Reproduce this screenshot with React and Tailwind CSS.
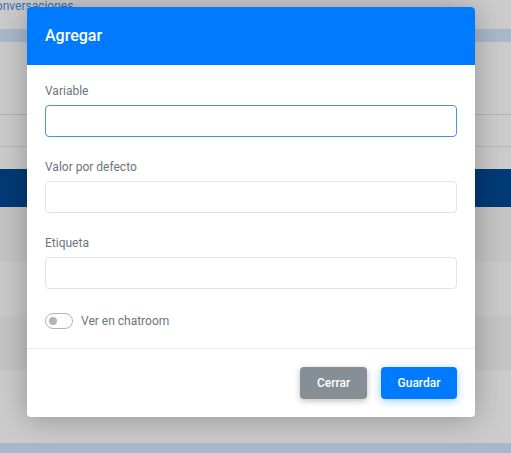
import React from "react";

function Field({ label, focused }) {
  return (
    <div className="mb-[21px]">
      <label className="block h-[18px] text-[12px] leading-[18px] text-[#6c757d] mb-[5px]">{label}</label>
      <input
        type="text"
        className={
          "block w-full h-[32px] rounded-[4px] bg-white px-3 text-[13px] outline-none " +
          (focused ? "border border-[#4a90e2]" : "border border-[#e3e3e3]")
        }
      />
    </div>
  );
}

export default function App() {
  return (
    <div className="relative h-[453px] w-[511px] overflow-hidden bg-[#cbcbcb] font-['Roboto',sans-serif]">
      {/* page behind the dialog */}
      <div className="h-[29px]">
        <span className="relative -left-[12px] -top-[1px] block text-[12px] leading-[14px] text-[#3b6fb3]">Conversaciones</span>
      </div>
      <div className="h-[13px] bg-[#a9b8c9]" />
      <div className="h-[72px]" />
      <div className="h-[1px] bg-[#b3b3b3]" />
      <div className="h-[31px]" />
      <div className="h-[1px] bg-[#b8b8b8]" />
      <div className="h-[22px]" />
      <div className="h-[38px] bg-[#023a75]" />
      <div className="h-[55px] bg-[#c4c4c4]" />
      <div className="h-[54px] bg-[#c9c9c9]" />
      <div className="h-[54px] bg-[#c4c4c4]" />
      <div className="h-[73px] bg-[#cbcbcb]" />
      <div className="h-[10px] bg-[#a9b8c9]" />

      {/* dialog */}
      <div className="absolute inset-0">
        <div className="ml-[27px] mt-[7px] w-[448px] overflow-hidden rounded-[4px] bg-white shadow-[0_2px_28px_rgba(0,0,0,0.28)]">
          <div className="flex h-[58px] items-center bg-[#007bff] px-[18px]">
            <h2 className="text-[16px] font-medium text-white">Agregar</h2>
          </div>
          <div className="px-[18px] pt-[17px] pb-[19px]">
            <Field label="Variable" focused />
            <Field label="Valor por defecto" />
            <Field label="Etiqueta" />
            <div className="mt-[24px] flex h-[16px] items-center">
              <span className="relative inline-block h-[16px] w-[28px] rounded-full border border-[#adb5bd] bg-white">
                <span className="absolute left-[3px] top-[3px] h-[8px] w-[8px] rounded-full bg-[#adb5bd]" />
              </span>
              <span className="ml-[8px] text-[12px] text-[#6c757d]">Ver en chatroom</span>
            </div>
          </div>
          <div className="border-t border-[#e9ecef] px-[18px] pt-[18px] pb-[18px]">
            <div className="flex justify-end gap-[14px]">
              <button className="h-[32px] w-[67px] rounded-[4px] bg-[#868e96] text-[12px] font-medium text-white shadow-[0_2px_6px_rgba(0,0,0,0.25)]">
                Cerrar
              </button>
              <button className="h-[32px] w-[76px] rounded-[4px] bg-[#007bff] text-[12px] font-medium text-white shadow-[0_2px_8px_rgba(0,123,255,0.4)]">
                Guardar
              </button>
            </div>
          </div>
        </div>
      </div>
    </div>
  );
}
